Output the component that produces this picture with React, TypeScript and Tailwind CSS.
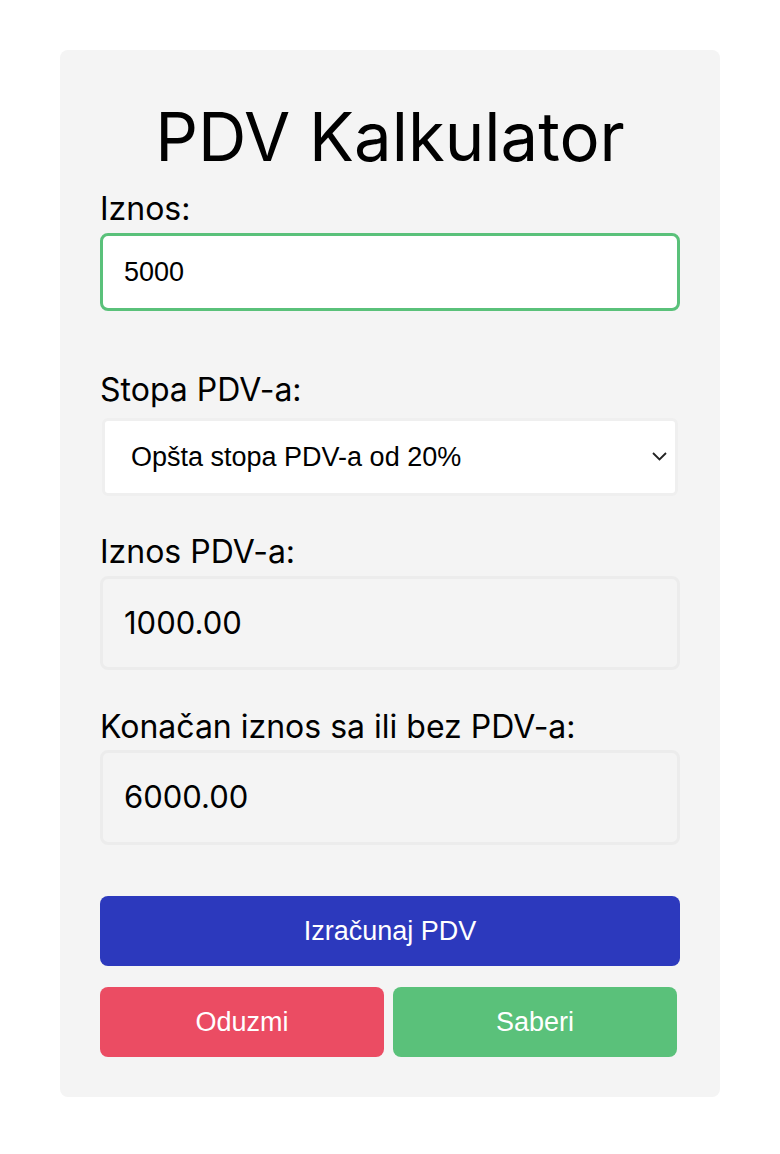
import { useState } from "react"

const headFont = "font-['Inter','Noto_Sans',sans-serif]"
const bodyFont = "font-['Liberation_Sans',Arial,sans-serif]"

const Label = ({ children }: { children: string }) => (
	<label className={`${headFont} block text-[32px] leading-[38px] text-black`}>{children}</label>
)

export default function App() {
	const [iznos, setIznos] = useState("5000")
	const [stopa, setStopa] = useState("20")

	return (
		<div className="min-h-[1154px] bg-white pt-[50px]">
			<div className="mx-auto w-[660px] rounded-lg bg-[#f4f4f4] px-10 pt-[49px] pb-10">
				<h1 className={`${headFont} text-center text-[67px] leading-[76px] text-black mb-[15px]`}>PDV Kalkulator</h1>

				<Label>Iznos:</Label>
				<input
					value={iznos}
					onChange={(e) => setIznos(e.target.value)}
					className={`${bodyFont} mt-[5px] block w-full h-[78px] rounded-lg border-[3px] border-[#5ac17a] bg-white px-[21px] text-[27px] text-black outline-none`}
				/>

				<div className="mt-[60px]">
					<Label>Stopa PDV-a:</Label>
					<div className="relative mx-[2px] mt-[9px]">
						<select
							value={stopa}
							onChange={(e) => setStopa(e.target.value)}
							className={`${bodyFont} block w-full h-[78px] appearance-none rounded-md border-[3px] border-[#efefef] bg-white pl-[26px] text-[27px] text-black outline-none`}
						>
							<option value="20">Opšta stopa PDV-a od 20%</option>
							<option value="10">Posebna stopa PDV-a od 10%</option>
						</select>
						<svg className="pointer-events-none absolute right-[11px] top-[34px] h-[9px] w-[15px]" viewBox="0 0 15 9" fill="none">
							<path d="M1 1 L7.5 7.5 L14 1" stroke="#222" strokeWidth="1.8" />
						</svg>
					</div>
				</div>

				<div className="mt-[37px]">
					<Label>Iznos PDV-a:</Label>
					<div className={`${headFont} mt-[5px] flex h-[94px] items-center rounded-lg border-[3px] border-[#ececec] px-[21px] text-[31px] text-black`}>1000.00</div>
				</div>

				<div className="mt-[38px]">
					<Label>Konačan iznos sa ili bez PDV-a:</Label>
					<div className={`${headFont} mt-[4px] flex h-[95px] items-center rounded-lg border-[3px] border-[#ececec] px-[21px] text-[31px] text-black`}>6000.00</div>
				</div>

				<button className={`${bodyFont} mt-[51px] block w-full h-[70px] rounded-lg bg-[#2c39bd] text-[27px] text-white`}>Izračunaj PDV</button>

				<div className="mt-[21px] flex gap-[9px]">
					<button className={`${bodyFont} h-[70px] w-[284px] rounded-lg bg-[#eb4c63] text-[27px] text-white`}>Oduzmi</button>
					<button className={`${bodyFont} h-[70px] w-[284px] rounded-lg bg-[#5ac17a] text-[27px] text-white`}>Saberi</button>
				</div>
			</div>
		</div>
	)
}
